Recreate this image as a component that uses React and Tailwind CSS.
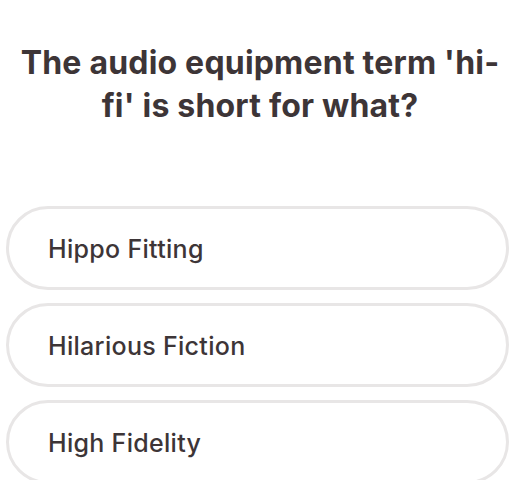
import React from "react";

const options = ["Hippo Fitting", "Hilarious Fiction", "High Fidelity"];

const App = () => {
  return (
    <div
      className="w-[520px] h-[480px] overflow-hidden bg-white text-[#3d3537]"
      style={{ fontFamily: "Inter, 'Noto Sans', sans-serif" }}
    >
      <h1 className="pt-[41px] px-2 text-center text-[32px] leading-[43px] font-bold tracking-[0.2px]">
        The audio equipment term 'hi-
        <br />
        fi' is short for what?
      </h1>

      <div className="mt-[79px] flex flex-col gap-[13px] pl-[6px] pr-[11px]">
        {options.map((opt) => (
          <button
            key={opt}
            className="h-[84px] shrink-0 rounded-full border-[3px] border-[#e8e6e6] pl-[39px] pt-[4px] text-left text-[25px] font-medium tracking-[0.3px]"
          >
            {opt}
          </button>
        ))}
      </div>
    </div>
  );
};

export default App;
